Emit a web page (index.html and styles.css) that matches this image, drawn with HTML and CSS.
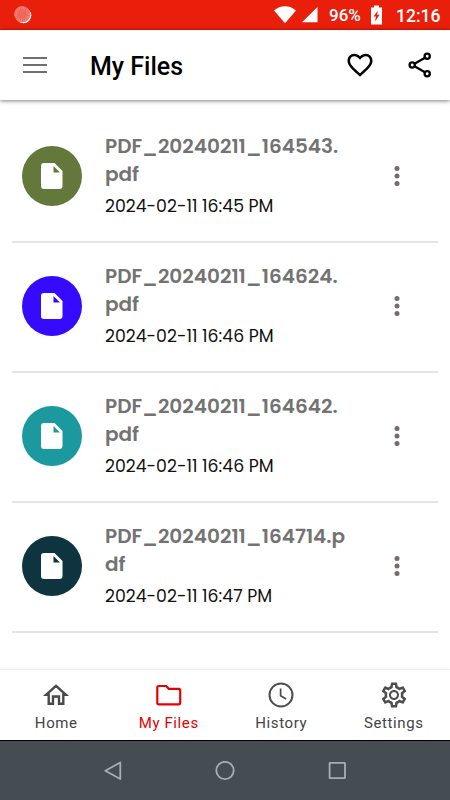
FILE: index.html
```html
<!DOCTYPE html>
<html lang="en">
<head>
    <meta charset="UTF-8">
    <meta name="viewport" content="width=device-width, initial-scale=1.0">
    <title>My Files</title>
    <link rel="stylesheet" href="styles.css">
</head>
<body>
    <div class="status-bar">
        <svg class="status-app" width="18" height="18" viewBox="0 0 18 18">
            <circle cx="9.5" cy="9.5" r="7.8" fill="#fff"/>
            <circle cx="8.2" cy="8.2" r="8.1" fill="#f0685c"/>
            <circle cx="8.2" cy="8.2" r="6.4" fill="none" stroke="#f38a80" stroke-width="2.2" stroke-dasharray="1 1"/>
        </svg>
        <svg class="wifi" width="22" height="18" viewBox="0 0 22 18"><path d="M0 4.400C6-1.300 16-1.300 22 4.400L11 17.300z" fill="#fff"/></svg>
        <svg class="signal" width="16" height="16" viewBox="0 0 16 16"><path d="M15.500 0v15.300H0z" fill="#fff"/></svg>
        <span class="battery-text">96%</span>
        <svg class="battery" width="11" height="20" viewBox="0 0 11 20">
            <path d="M3 .5h5v2h3v17H0v-17h3z" fill="#fff"/>
            <path d="M7 5.500 2.500 11.500H5L4 16.500l4.700-6.700H6z" fill="#e91e0b"/>
        </svg>
        <span class="clock">12:16</span>
    </div>

    <header class="app-bar">
        <svg class="menu" width="24" height="18" viewBox="0 0 24 18"><path d="M0 2h24M0 9h24M0 16h24" stroke="#707070" stroke-width="2"/></svg>
        <h1>My Files</h1>
        <svg class="heart" width="30" height="30" viewBox="0 0 24 24"><path d="M16.5 3c-1.74 0-3.41.81-4.5 2.09C10.91 3.81 9.24 3 7.5 3 4.42 3 2 5.42 2 8.5c0 3.78 3.4 6.86 8.55 11.54L12 21.35l1.45-1.32C18.6 15.36 22 12.28 22 8.5 22 5.42 19.58 3 16.5 3zm-4.4 15.55l-.1.1-.1-.1C7.14 14.24 4 11.39 4 8.5 4 6.5 5.5 5 7.5 5c1.54 0 3.04.99 4.500 2.700C13.460 5.990 14.960 5 16.500 5c2 0 3.500 1.500 3.500 3.500 0 2.890-3.140 5.740-7.900 10.050z"/></svg>
        <svg class="share" width="24" height="26" viewBox="0 0 24 26" fill="none" stroke="#000" stroke-width="2.3">
            <path d="M6.500 11.700l10.500-6M6.500 14.300l10.500 6"/>
            <circle cx="4.200" cy="13" r="2.600"/>
            <circle cx="19.200" cy="4.300" r="2.600"/>
            <circle cx="19.200" cy="21.700" r="2.600"/>
        </svg>
    </header>

    <main class="file-list">
        <div class="file">
            <div class="file-icon olive">
                <svg width="22" height="26" viewBox="0 0 22 26"><path d="M3 0h10.500L21.500 8v15a3 3 0 0 1-3 3H3a3 3 0 0 1-3-3V3a3 3 0 0 1 3-3zm9.500 3v6.500h6.500z" fill="#fff" fill-rule="evenodd"/></svg>
            </div>
            <div class="file-info">
                <div class="file-name">PDF_20240211_164543.<br>pdf</div>
                <div class="file-date">2024-02-11 16:45 PM</div>
            </div>
            <svg class="more" width="6" height="20" viewBox="0 0 6 20"><circle cx="3" cy="2.500" r="2.500"/><circle cx="3" cy="10" r="2.500"/><circle cx="3" cy="17.500" r="2.500"/></svg>
        </div>
        <div class="file">
            <div class="file-icon blue">
                <svg width="22" height="26" viewBox="0 0 22 26"><path d="M3 0h10.500L21.500 8v15a3 3 0 0 1-3 3H3a3 3 0 0 1-3-3V3a3 3 0 0 1 3-3zm9.500 3v6.500h6.500z" fill="#fff" fill-rule="evenodd"/></svg>
            </div>
            <div class="file-info">
                <div class="file-name">PDF_20240211_164624.<br>pdf</div>
                <div class="file-date">2024-02-11 16:46 PM</div>
            </div>
            <svg class="more" width="6" height="20" viewBox="0 0 6 20"><circle cx="3" cy="2.500" r="2.500"/><circle cx="3" cy="10" r="2.500"/><circle cx="3" cy="17.500" r="2.500"/></svg>
        </div>
        <div class="file">
            <div class="file-icon teal">
                <svg width="22" height="26" viewBox="0 0 22 26"><path d="M3 0h10.500L21.500 8v15a3 3 0 0 1-3 3H3a3 3 0 0 1-3-3V3a3 3 0 0 1 3-3zm9.500 3v6.500h6.500z" fill="#fff" fill-rule="evenodd"/></svg>
            </div>
            <div class="file-info">
                <div class="file-name">PDF_20240211_164642.<br>pdf</div>
                <div class="file-date">2024-02-11 16:46 PM</div>
            </div>
            <svg class="more" width="6" height="20" viewBox="0 0 6 20"><circle cx="3" cy="2.500" r="2.500"/><circle cx="3" cy="10" r="2.500"/><circle cx="3" cy="17.500" r="2.500"/></svg>
        </div>
        <div class="file">
            <div class="file-icon navy">
                <svg width="22" height="26" viewBox="0 0 22 26"><path d="M3 0h10.500L21.500 8v15a3 3 0 0 1-3 3H3a3 3 0 0 1-3-3V3a3 3 0 0 1 3-3zm9.500 3v6.500h6.500z" fill="#fff" fill-rule="evenodd"/></svg>
            </div>
            <div class="file-info">
                <div class="file-name">PDF_20240211_164714.p<br>df</div>
                <div class="file-date">2024-02-11 16:47 PM</div>
            </div>
            <svg class="more" width="6" height="20" viewBox="0 0 6 20"><circle cx="3" cy="2.500" r="2.500"/><circle cx="3" cy="10" r="2.500"/><circle cx="3" cy="17.500" r="2.500"/></svg>
        </div>
    </main>

    <nav class="tabs">
        <div class="tab">
            <svg width="30" height="30" viewBox="0 0 30 30" fill="none" stroke="#4a4a4a" stroke-width="2.4"><path d="M5 14.800L15 5.800 25 14.800H22.300V23.800H18V16.500H12V23.800H7.700V14.800z"/></svg>
            <span>Home</span>
        </div>
        <div class="tab active">
            <svg width="30" height="30" viewBox="0 0 30 30" fill="none"><path d="M4.500 6h7.700l2.500 2.800h10q1.500 0 1.500 1.500v12.500q0 1.500-1.500 1.500H4.800q-1.500 0-1.500-1.500V7.500q0-1.500 1.200-1.500z" stroke="currentColor" stroke-width="2.200"/></svg>
            <span>My Files</span>
        </div>
        <div class="tab">
            <svg width="30" height="30" viewBox="0 0 30 30" fill="none" stroke="#4d4d4d" stroke-width="2"><circle cx="15" cy="15" r="11.500"/><path d="M14.600 8.500v7.200l5.600 3.400" stroke-width="1.700"/></svg>
            <span>History</span>
        </div>
        <div class="tab">
            <svg width="30" height="30" viewBox="0 0 24 24"><path d="M19.430 12.980c.04-.32.07-.64.07-.98 0-.34-.03-.66-.07-.98l2.110-1.650c.19-.15.24-.42.12-.64l-2-3.460c-.09-.16-.26-.25-.44-.25-.06 0-.12.01-.17.03l-2.490 1c-.52-.4-1.080-.73-1.690-.98l-.38-2.650C14.460 2.180 14.250 2 14 2h-4c-.25 0-.46.18-.49.42l-.38 2.650c-.61.25-1.170.59-1.690.98l-2.490-1c-.06-.02-.12-.03-.18-.03-.17 0-.34.09-.43.25l-2 3.460c-.13.22-.07.49.12.64l2.110 1.650c-.04.32-.07.65-.07.98 0 .33.03.66.07.98l-2.110 1.650c-.19.15-.24.42-.12.64l2 3.460c.09.16.26.25.44.25.06 0 .12-.01.17-.03l2.490-1c.52.4 1.080.73 1.690.98l.38 2.650c.03.24.24.42.49.42h4c.25 0 .46-.18.49-.42l.38-2.650c.61-.25 1.170-.59 1.690-.98l2.490 1c.06.02.12.03.18.03.17 0 .34-.09.43-.25l2-3.460c.12-.22.07-.49-.12-.64l-2.110-1.650zm-1.980-1.710c.04.31.05.52.05.73 0 .21-.02.43-.05.73l-.14 1.130.89.7 1.080.84-.7 1.210-1.270-.51-1.040-.42-.9.68c-.43.32-.84.56-1.250.73l-1.060.43-.16 1.130-.2 1.350h-1.400l-.19-1.350-.16-1.130-1.060-.43c-.43-.18-.83-.41-1.230-.71l-.91-.7-1.060.43-1.270.51-.7-1.210 1.080-.84.89-.7-.14-1.130c-.03-.31-.05-.54-.05-.74s.02-.43.05-.73l.14-1.130-.89-.7-1.080-.84.7-1.210 1.270.51 1.040.42.9-.68c.43-.32.84-.56 1.250-.73l1.060-.43.16-1.130.2-1.350h1.390l.19 1.350.16 1.130 1.060.43c.43.18.83.41 1.230.71l.91.7 1.060-.43 1.270-.51.7 1.210-1.070.85-.89.7.14 1.130zM12 8c-2.210 0-4 1.790-4 4s1.790 4 4 4 4-1.790 4-4-1.790-4-4-4zm0 6.400c-1.330 0-2.400-1.070-2.400-2.400s1.070-2.400 2.400-2.400 2.400 1.070 2.400 2.400-1.070 2.400-2.400 2.400z"/></svg>
            <span>Settings</span>
        </div>
    </nav>

    <div class="system-nav">
        <svg width="20" height="20" viewBox="0 0 20 20"><path d="M17.300 1.500v16.500L2.300 9.700z"/></svg>
        <svg width="20" height="20" viewBox="0 0 20 20"><circle cx="10" cy="9.500" r="8.700"/></svg>
        <svg width="20" height="20" viewBox="0 0 20 20"><rect x="2.600" y="1.800" width="15.400" height="15.400" rx=".5"/></svg>
    </div>
</body>
</html>
```

FILE: styles.css
```css
* {
    box-sizing: border-box;
}
body {
    margin: 0;
    width: 450px;
    height: 800px;
    display: flex;
    flex-direction: column;
    overflow: hidden;
    background-color: #fff;
    font-family: Roboto, sans-serif;
}
svg {
    display: block;
    flex-shrink: 0;
}
.status-bar {
    height: 30px;
    display: flex;
    align-items: center;
    padding: 0 10px 0 14px;
    background-color: #e91e0b;
    border-bottom: 1px solid #d81706;
    color: #fff;
}
.wifi {
    margin-left: auto;
}
.signal {
    margin-left: 6px;
}
.battery-text {
    margin: 1px 0 0 11px;
    width: 33px;
    font-size: 17px;
    font-weight: 500;
}
.battery {
    margin-left: 9px;
}
.clock {
    width: 44px;
    margin: 2px 0 0 14px;
    font-size: 17.5px;
    font-weight: 500;
}
.app-bar {
    height: 70px;
    flex-shrink: 0;
    display: flex;
    align-items: center;
    padding: 0 18px 0 23px;
    box-shadow: 0 1px 4px rgba(0, 0, 0, 0.5);
}
.app-bar h1 {
    margin: 2px 0 0 43px;
    font-size: 25px;
    font-weight: 500;
}
.heart {
    margin-left: auto;
}
.share {
    margin-left: 33px;
}
.file-list {
    flex: 1;
    padding: 13px 12px 0;
}
.file {
    height: 130px;
    display: flex;
    border-bottom: 2px solid #e4e4e4;
    padding-left: 10.4px;
}
.file-icon {
    width: 60px;
    height: 60px;
    margin: 33.4px 22.6px 0 0;
    border-radius: 50%;
    display: flex;
    align-items: center;
    justify-content: center;
}
.olive { background-color: #64783b; }
.blue { background-color: #350aff; }
.teal { background-color: #1b999f; }
.navy { background-color: #0d343f; }
.file-info {
    width: 289.4px;
    padding-top: 19px;
    font-family: Poppins, Inter, sans-serif;
    white-space: nowrap;
}
.file-name {
    color: #737373;
    font-size: 20px;
    font-weight: 600;
    line-height: 28px;
}
.file-date {
    margin-top: 6px;
    color: #111;
    font-size: 17.3px;
    line-height: 25px;
}
.more {
    margin-top: 53.4px;
    fill: #756b6b;
}
.tabs {
    height: 71px;
    display: flex;
    border-top: 1px solid #eee;
    box-shadow: 0 -1px 2px rgba(0, 0, 0, 0.04);
}
.tab {
    flex: 1;
    display: flex;
    flex-direction: column;
    align-items: center;
    padding-top: 10px;
    color: #444;
    fill: #4d4d4d;
    font-size: 15px;
    letter-spacing: 0.6px;
}
.tab span {
    margin-top: 4px;
    line-height: 18px;
}
.tab.active {
    color: #e60000;
}
.system-nav {
    height: 60px;
    display: flex;
    align-items: center;
    justify-content: center;
    gap: 92px;
    background-color: #454d52;
    border-top: 1px solid #000;
    fill: none;
    stroke: #a9adaf;
    stroke-width: 1.8;
    stroke-linejoin: round;
}
```
